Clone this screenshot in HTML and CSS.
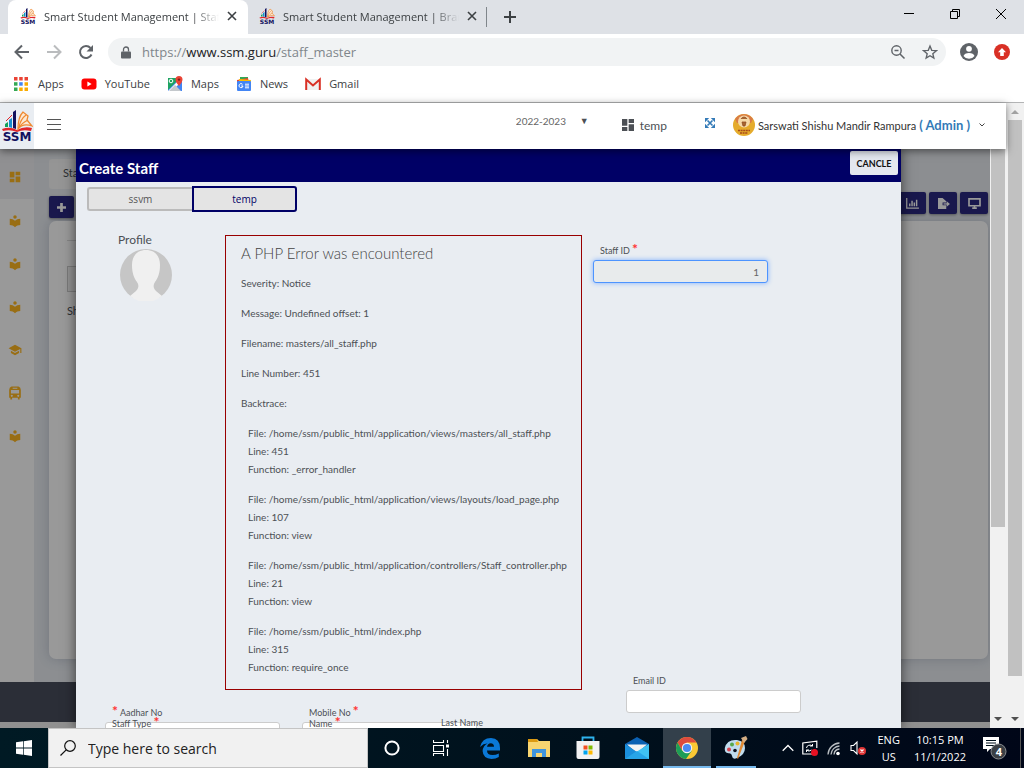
FILE: index.html
```
<!DOCTYPE html>
<html lang="en">
<head>
    <meta charset="UTF-8">
    <meta name="viewport" content="width=device-width, initial-scale=1.0">
    <title>Smart Student Management | Staff Master</title>
    <link rel="stylesheet" href="styles.css">
</head>
<body>

<!-- shared symbols -->
<svg class="symbols" aria-hidden="true">
    <symbol id="ssm-logo" viewBox="0 0 32 32">
        <path d="M1 19 Q9 16 16 20 Q23 16 31 18 L30 21 Q22 19 16 22 Q9 19 2 21Z" fill="#e0262b"/>
        <path d="M4 14 L7 12 V17 L4 17Z" fill="#14a05a"/>
        <path d="M8 10 L11 8 V18 L8 17Z" fill="#168fd0"/>
        <path d="M12 2 L15 0 V19 L12 18Z" fill="#12125e"/>
        <path d="M5 11 L11 5" stroke="#e0262b" fill="none"/>
        <path d="M17 19 C17 11 18 6 22 2 L27 6 L26 10 L31 16 C25 14 20 15 17 19Z" fill="#fbe9d6" stroke="#ef8a32" stroke-width="1.3"/>
        <path d="M18 17 C19 12 21 8 25 5 M18 18 C20 14 23 12 27 10" stroke="#ef8a32" stroke-width="1.2" fill="none"/>
        <text x="16" y="31" text-anchor="middle" class="logo-text">SSM</text>
    </symbol>
    <symbol id="close-x" viewBox="0 0 10 10"><path d="M1 1 L9 9 M9 1 L1 9" stroke="currentColor" stroke-width="1.6"/></symbol>
    <symbol id="dashboard" viewBox="0 0 24 24"><path d="M3 13h8V3H3v10zm0 8h8v-6H3v6zm10 0h8V11h-8v10zm0-18v6h8V3h-8z" fill="currentColor"/></symbol>
    <symbol id="reader" viewBox="0 0 24 24"><path d="M12 11.6C9.700 9.400 6.500 8 3 8v11c3.500 0 6.700 1.300 9 3.500 2.300-2.200 5.500-3.500 9-3.500V8c-3.500 0-6.700 1.400-9 3.600zM12 8a3 3 0 1 0 0-6 3 3 0 0 0 0 6z" fill="currentColor"/></symbol>
    <symbol id="school" viewBox="0 0 24 24"><path d="M5 13.200v4L12 21l7-3.800v-4L12 17l-7-3.800zM12 3 1 9l11 6 9-4.900V17h2V9L12 3z" fill="currentColor"/></symbol>
    <symbol id="bus" viewBox="0 0 24 24"><path d="M6 1h12q4 1 4 6v13h-2v3h-3v-3H7v3H4v-3H2V7q0-5 4-6z M5 7v6h14V7z M8 3v1.500h8V3z M6.500 15a1.700 1.700 0 1 0 .1 0z M17.500 15a1.700 1.700 0 1 0 .1 0z" fill="currentColor" fill-rule="evenodd"/></symbol>
</svg>

<div class="screen">

    <!-- browser tabs -->
    <div class="tab-strip">
        <div class="tab active">
            <svg class="favicon"><use href="#ssm-logo"/></svg>
            <span class="tab-title">Smart Student Management | Staff Master</span>
            <button class="tab-close" aria-label="Close tab"><svg><use href="#close-x"/></svg></button>
        </div>
        <div class="tab">
            <svg class="favicon"><use href="#ssm-logo"/></svg>
            <span class="tab-title">Smart Student Management | Branch</span>
            <button class="tab-close" aria-label="Close tab"><svg><use href="#close-x"/></svg></button>
        </div>
        <button class="new-tab" aria-label="New tab">
            <svg viewBox="0 0 12 12"><path d="M6 0v12M0 6h12" stroke="#3c4043" stroke-width="2"/></svg>
        </button>
        <div class="window-buttons">
            <button aria-label="Minimize"><svg viewBox="0 0 10 10"><path d="M0 4.500h10" stroke="#000"/></svg></button>
            <button aria-label="Restore"><svg viewBox="0 0 10 10"><path d="M.5 2.500h7v7h-7zM2.500 2.500v-2h7v7h-2" fill="none" stroke="#000"/></svg></button>
            <button aria-label="Close"><svg viewBox="0 0 10 10"><path d="M0 0l10 10M10 0L0 10" stroke="#000"/></svg></button>
        </div>
    </div>

    <div class="toolbar">
        <button class="tool" aria-label="Back"><svg viewBox="0 0 16 16"><path d="M15 8H2M8 1.500L1.500 8 8 14.500" fill="none" stroke="#5f6368" stroke-width="2"/></svg></button>
        <button class="tool" aria-label="Forward"><svg viewBox="0 0 16 16"><path d="M1 8h13M8 1.500L14.500 8 8 14.500" fill="none" stroke="#babcbe" stroke-width="2"/></svg></button>
        <button class="tool" aria-label="Reload"><svg viewBox="0 0 16 16"><path d="M13.500 10.500A6 6 0 1 1 12.500 4" fill="none" stroke="#5f6368" stroke-width="2"/><path d="M15 1v6.500H8.500z" fill="#5f6368"/></svg></button>
        <div class="omnibox">
            <svg class="lock" viewBox="0 0 10 12"><path d="M1 5h8q1 0 1 1v5q0 1-1 1H1q-1 0-1-1V6q0-1 1-1z" fill="#5f6368"/><path d="M2.500 5V3a2.500 2.500 0 0 1 5 0v2" fill="none" stroke="#5f6368" stroke-width="1.300"/></svg>
            <span class="url">https://<b>www.ssm.guru</b>/staff_master</span>
            <button aria-label="Zoom"><svg viewBox="-1 -1 16 16"><path d="M9 9l4.500 4.500M3.500 5.500h4" stroke="#5f6368" stroke-width="1.500"/><circle cx="5.500" cy="5.500" r="4.700" fill="none" stroke="#5f6368" stroke-width="1.400"/></svg></button>
            <button aria-label="Bookmark this page"><svg viewBox="0 0 24 24"><path d="M12 3l2.600 6.500 6.900.5-5.300 4.500 1.600 6.700L12 17.500l-5.800 3.700 1.600-6.700L2.500 10l6.900-.5z" fill="none" stroke="#5f6368" stroke-width="2"/></svg></button>
        </div>
        <button class="account" aria-label="Profile"><svg viewBox="0 0 18 18"><circle cx="9" cy="9" r="9" fill="#5f6368"/><circle cx="9" cy="5.800" r="2.900" fill="#fff"/><path d="M3.500 13q1-3 5.500-3t5.500 3q-2 2.800-5.500 2.800T3.500 13z" fill="#fff"/></svg></button>
        <button class="update" aria-label="Update"><svg viewBox="0 0 16 16"><circle cx="8" cy="8" r="8" fill="#d93025"/><path d="M8 4l4 4.200H9.800V12H6.200V8.200H4z" fill="#fff"/></svg></button>
    </div>

    <nav class="bookmarks">
        <a href="#"><svg viewBox="0 0 14 14"><path d="M0 0h3.500v3.500H0zM5.200 0h3.500v3.500H5.200zM10.500 0H14v3.500h-3.500z" fill="#ea4335"/><path d="M0 5.200h3.500v3.500H0z" fill="#34a853"/><path d="M5.200 5.200h3.500v3.500H5.200z" fill="#4285f4"/><path d="M10.500 5.200H14v3.500h-3.500zM5.200 10.500h3.500V14H5.200zM10.500 10.500H14V14h-3.500z" fill="#f9ab00"/><path d="M0 10.500h3.500V14H0z" fill="#34a853"/></svg>Apps</a>
        <a href="#"><svg viewBox="0 0 16 16"><rect y="2.500" x=".5" width="15" height="11" rx="3" fill="#f00"/><path d="M6.400 5.500v5l4.200-2.500z" fill="#fff"/></svg>YouTube</a>
        <a href="#"><svg viewBox="0 0 16 16"><path d="M1 2h14v13H1z" fill="#4285f4"/><path d="M1 2h12L1 14z" fill="#1ea362"/><path d="M1 15L14 2l1 1v2L5 15z" fill="#fff"/><path d="M2 15l6-6 6 6z" fill="#c4c8cc"/><circle cx="4" cy="5" r="1.800" fill="none" stroke="#fff"/><path d="M12 10Q8.500 6 8.500 3.500a3.500 3.500 0 0 1 7 0Q15.500 6 12 10z" fill="#ea4335"/><circle cx="12" cy="3.600" r="1.200" fill="#801f18"/></svg>Maps</a>
        <a href="#"><svg viewBox="0 0 16 16"><path d="M4 1h8v5H4z" fill="#34a853"/><path d="M1 4l11-2 1 5H1z" fill="#ea4335"/><path d="M3 3l12 1-1 5H3z" fill="#fbbc04"/><rect x="1" y="5" width="14" height="10" rx="1" fill="#4285f4"/><path d="M6.500 8.300A2 2 0 1 0 7 10H5.200M9 8.200h4M9 10h4M9 11.800h4" fill="none" stroke="#fff"/></svg>News</a>
        <a href="#"><svg viewBox="0 0 16 16"><path d="M1 3h14v11H1z" fill="#f1f1f1"/><path d="M1.200 14V3.500L8 9.500l6.800-6V14" fill="none" stroke="#d93025" stroke-width="2"/></svg>Gmail</a>
    </nav>

    <!-- page -->
    <div class="page">
        <div class="frame">
            <header class="app-header">
                <a class="brand" href="#" aria-label="SSM"><svg><use href="#ssm-logo"/></svg></a>
                <button class="menu-toggle" aria-label="Toggle menu"><span></span><span></span><span></span></button>
                <div class="header-right">
                    <label class="session">
                        <select aria-label="Session"><option>2022-2023</option></select>
                        <span>▼</span>
                    </label>
                    <a class="branch" href="#"><svg><use href="#dashboard"/></svg>temp</a>
                    <button class="expand" aria-label="Full screen">
                        <svg viewBox="0 0 12 12"><path d="M3 3l6 6M9 3L3 9" stroke="#337ab7" stroke-width="2"/><path d="M0 0h5L0 5zM12 0v5L7 0zM0 12V7l5 5zM12 12H7l5-5z" fill="#337ab7"/></svg>
                    </button>
                    <button class="user">
                        <svg class="user-pic" viewBox="0 0 22 22"><circle cx="11" cy="11" r="11" fill="#e5ab2b"/><path d="M2 5a11 11 0 0 1 18 0L18 9H4z" fill="#d97b45"/><ellipse cx="11" cy="7.500" rx="6" ry="6" fill="#f5d9a8"/><path d="M8 5q1-2 3-2t3 2M9 8h4l-1 4h-2z" stroke="#8f4c24" stroke-width=".8" fill="#a8652f"/><path d="M5 16.500h12M7 19h8" stroke="#a6491b" stroke-width="1.400" stroke-dasharray="2 .6"/></svg>
                        <span>Sarswati Shishu Mandir Rampura</span>
                        <strong>( Admin )</strong>
                        <svg class="chevron" viewBox="0 0 6 4"><path d="M.5.5L3 3 5.500.5" fill="none" stroke="#444"/></svg>
                    </button>
                </div>
            </header>

            <div class="stage">
                <div class="content">
                    <nav class="sidebar">
                        <a href="#" class="current" aria-label="Dashboard"><svg><use href="#dashboard"/></svg></a>
                        <a href="#" aria-label="Masters"><svg><use href="#reader"/></svg></a>
                        <a href="#" aria-label="Students"><svg><use href="#reader"/></svg></a>
                        <a href="#" aria-label="Fees"><svg><use href="#reader"/></svg></a>
                        <a href="#" aria-label="Exams"><svg><use href="#school"/></svg></a>
                        <a href="#" aria-label="Transport"><svg><use href="#bus"/></svg></a>
                        <a href="#" aria-label="Reports"><svg><use href="#reader"/></svg></a>
                    </nav>
                    <main class="main">
                        <div class="crumb">Staff</div>
                        <div class="actions">
                            <button class="action add" aria-label="Add"><svg viewBox="0 0 10 10"><path d="M5 0v10M0 5h10" stroke="#fff" stroke-width="3"/></svg></button>
                            <button class="action" aria-label="Chart"><svg viewBox="0 0 14 12"><path d="M.7 0v11H14" fill="none" stroke="#fff" stroke-width="1.400"/><path d="M4 9V6M6.500 9V3M9 9V5M11.500 9V2" stroke="#fff" stroke-width="1.600"/></svg></button>
                            <button class="action" aria-label="Export"><svg viewBox="0 0 14 12"><path d="M1 0h5l4 3.500V5H6v3h4v4H1z" fill="#fff"/><path d="M7 6.500h4" stroke="#fff" stroke-width="1.400"/><path d="M10.500 3.500L14 6.500l-3.500 3z" fill="#fff"/></svg></button>
                            <button class="action" aria-label="Display"><svg viewBox="0 0 14 12"><path d="M1 1h12v7.500H1zM4.500 11h5M7 8v3" fill="none" stroke="#fff" stroke-width="1.800"/></svg></button>
                        </div>
                        <section class="card">
                            <hr>
                            <div class="filter"></div>
                            <p>Show</p>
                        </section>
                    </main>
                </div>
                <footer class="footer"></footer>

                <div class="backdrop"></div>

                <form class="modal">
                    <div class="modal-header">
                        <h2>Create Staff</h2>
                        <button type="button" class="cancel">CANCLE</button>
                    </div>
                    <div class="modal-tabs">
                        <button type="button">ssvm</button>
                        <button type="button" class="selected">temp</button>
                    </div>
                    <div class="modal-body">
                        <div class="profile">
                            <span>Profile</span>
                            <svg viewBox="0 0 52 52"><circle cx="26" cy="26" r="26" fill="#c6c6c6"/><path d="M26 1C17 1 12 7 12 16c0 8 2 13 5 17 2 3 2 6-1 9l-6 5q7 6 16 6t16-6l-6-5c-3-3-3-6-1-9 3-4 5-9 5-17C40 7 35 1 26 1z" fill="#f0f0f0"/></svg>
                        </div>

                        <div class="php-error">
                            <h4>A PHP Error was encountered</h4>
                            <p>Severity: Notice</p>
                            <p>Message: Undefined offset: 1</p>
                            <p>Filename: masters/all_staff.php</p>
                            <p>Line Number: 451</p>
                            <p>Backtrace:</p>
                            <p class="trace">File: /home/ssm/public_html/application/views/masters/all_staff.php<br>Line: 451<br>Function: _error_handler</p>
                            <p class="trace">File: /home/ssm/public_html/application/views/layouts/load_page.php<br>Line: 107<br>Function: view</p>
                            <p class="trace">File: /home/ssm/public_html/application/controllers/Staff_controller.php<br>Line: 21<br>Function: view</p>
                            <p class="trace">File: /home/ssm/public_html/index.php<br>Line: 315<br>Function: require_once</p>
                        </div>

                        <div class="side-fields">
                            <div class="field">
                                <label for="staff-id">Staff ID <i>*</i></label>
                                <input type="text" id="staff-id" class="staff-id" value="1" readonly>
                            </div>
                            <div class="field email">
                                <label for="email">Email ID</label>
                                <input type="email" id="email">
                            </div>
                        </div>

                        <div class="more-fields">
                            <div class="field stacked">
                                <label for="aadhar"><i>*</i> Aadhar No</label>
                                <label for="aadhar">Staff Type <i>*</i></label>
                                <input type="text" id="aadhar">
                            </div>
                            <div class="field stacked">
                                <label for="mobile">Mobile No <i>*</i></label>
                                <label for="mobile">Name <i>*</i></label>
                                <input type="text" id="mobile">
                            </div>
                            <span class="last-name">Last Name</span>
                        </div>
                    </div>
                </form>

                <div class="scrollbar inner">
                    <div class="thumb"></div>
                    <svg viewBox="0 0 8 4"><path d="M0 0h8L4 4z" fill="#505050"/></svg>
                </div>
            </div>
        </div>
        <div class="scrollbar outer">
            <svg viewBox="0 0 8 4"><path d="M0 4h8L4 0z" fill="#a3a3a3"/></svg>
            <div class="thumb"></div>
            <svg viewBox="0 0 8 4"><path d="M0 0h8L4 4z" fill="#505050"/></svg>
        </div>
    </div>

    <!-- windows taskbar -->
    <div class="taskbar">
        <button class="start" aria-label="Start"><svg viewBox="0 0 16 16"><path d="M0 2.300L7 1.300V7.600H0zM7.700 1.200L16 0v7.600H7.700zM0 8.400h7v6.300L0 13.700zM7.700 8.400H16V16l-8.300-1.200z" fill="#fff"/></svg></button>
        <label class="search">
            <svg viewBox="0 0 16 16"><circle cx="10" cy="6" r="5.300" fill="none" stroke="#111" stroke-width="1.200"/><path d="M6.200 9.800L.5 15.500" stroke="#111" stroke-width="1.200"/></svg>
            <input type="text" placeholder="Type here to search" aria-label="Type here to search">
        </label>
        <div class="tasks">
            <button class="task" aria-label="Cortana"><svg class="small" viewBox="0 0 16 16"><circle cx="8" cy="8" r="6.600" fill="none" stroke="#fff" stroke-width="2"/></svg></button>
            <button class="task" aria-label="Task view"><svg class="small" viewBox="0 0 16 16"><path d="M.5 0v2.500h10V0M.5 5.500h10v6H.5zM.5 16v-2.500h10V16M14.500 0v3M14.500 9v7" fill="none" stroke="#fff" stroke-width="1.100"/><path d="M13 4.500h3v3h-3z" fill="#fff"/></svg></button>
            <button class="task" aria-label="Edge"><svg viewBox="0 0 24 24"><path d="M2 11Q4 2 13 2q9 .5 9 10v2.500H9Q9 19 14.500 19q3.500 0 6.300-1.600V21q-3 1.900-7.300 1.900Q5 22.500 4.600 15 5 10 9.500 7.600 5.500 7.500 2 11zM9 10.800h7Q16 7.200 12.700 7.200 9.800 7.300 9 10.800z" fill="#0a78d7"/></svg></button>
            <button class="task" aria-label="File Explorer"><svg viewBox="0 0 24 24"><path d="M1 3h9l2 2h11v16H1z" fill="#f8d570"/><path d="M1 3h9l1 3H1z" fill="#dc9a12"/><path d="M5 21v-8h14v8h-4v-4H9v4z" fill="#3f94dc"/></svg></button>
            <button class="task" aria-label="Store"><svg viewBox="0 0 24 24"><path d="M6.500 6V1.500h11V6" fill="none" stroke="#2eb3ee" stroke-width="1.800"/><path d="M.5 5h23v16q0 2-2 2h-19q-2 0-2-2z" fill="#f2f2f2"/><path d="M7.500 9.500h4v4h-4z" fill="#f25022"/><path d="M12.500 9.500h4v4h-4z" fill="#7fba00"/><path d="M7.500 14.500h4v4h-4z" fill="#00a4ef"/><path d="M12.500 14.500h4v4h-4z" fill="#ffb900"/></svg></button>
            <button class="task" aria-label="Mail"><svg viewBox="0 0 24 24"><path d="M0 8l12-7 12 7v6H0z" fill="#0b61b3"/><path d="M2 8.500h20L12 17z" fill="#f4f4f4"/><path d="M0 8l12 8-12 7z" fill="#1b8fdc"/><path d="M24 8v15H0z" fill="#3fc1f2"/><path d="M0 23l12-8 12 8z" fill="#27a5e8"/></svg></button>
            <button class="task running focused" aria-label="Chrome"><svg viewBox="0 0 24 24"><circle cx="12" cy="12" r="11" fill="#fbc934"/><path d="M2.500 6.500A11 11 0 0 1 21.500 6.500H12L7.200 14.700z" fill="#dd4b3e"/><path d="M2.500 6.500A11 11 0 0 0 11 23l5.800-8.300H7.200z" fill="#1d9d58"/><circle cx="12" cy="12" r="5.200" fill="#f5f5f5"/><circle cx="12" cy="12" r="4.100" fill="#4a8af4"/></svg></button>
            <button class="task running" aria-label="Paint"><svg viewBox="0 0 24 24"><path d="M13 4Q3 3 .8 12q-.6 5 3.600 5.200 3-.4 3.600 2.800Q8.600 24 13 22q8-3 8-10 0-7-8-8z" fill="#bfdcee"/><circle cx="5" cy="13.500" r="2" fill="#d8434e"/><circle cx="8" cy="8.500" r="2" fill="#56a84b"/><circle cx="13.500" cy="7.500" r="2" fill="#e9b52b"/><circle cx="11" cy="14.500" r="1.800" fill="#0d1420"/><path d="M21 5L14 23l-1-1 5-18z" fill="#e08a34"/><path d="M17 2l5-2 1.500 3-3.500 4z" fill="#d4ae84"/></svg></button>
        </div>
        <div class="tray">
            <svg class="tray-up" viewBox="0 0 12 7"><path d="M.7 6.300L6 1l5.300 5.300" fill="none" stroke="#fff" stroke-width="1.300"/></svg>
            <svg viewBox="0 0 16 16"><path d="M10 14H.8V3l14-1.800V8" fill="none" stroke="#fff" stroke-width="1.200"/><path d="M4.500 8a3.500 3 0 0 1 6-2V4M10.500 6H8M4.500 12v-2H7M4.500 10a3.500 3 0 0 0 5 0" fill="none" stroke="#fff"/><circle cx="12.500" cy="12.500" r="3.500" fill="#e81123"/></svg>
            <svg viewBox="0 0 16 16"><path d="M2 14.500A12 12 0 0 1 13.500 3M5 14.500A9 9 0 0 1 13.500 6M8 14.500A6 6 0 0 1 13.500 9" fill="none" stroke="#b9bec2" stroke-width="1.300"/><circle cx="12" cy="13.500" r="1.800" fill="#fff"/></svg>
            <svg viewBox="0 0 16 16"><path d="M1 5.500h2.500L7 2v12L3.500 10.500H1z" fill="none" stroke="#fff" stroke-width="1.100"/><circle cx="12" cy="11" r="4" fill="#e03535"/><path d="M10.500 9.500l3 3M13.500 9.500l-3 3" stroke="#fff" stroke-width="1.200"/></svg>
            <div class="tray-text lang">ENG<br>US</div>
            <div class="tray-text">10:15 PM<br>11/1/2022</div>
            <button class="notices" aria-label="Notifications">
                <svg viewBox="0 0 24 24"><path d="M0 1h16v12H7l-3 3v-3H0z" fill="#fff"/><path d="M3 4.500h10M3 7h10M3 9.500h10" stroke="#00111c"/><circle cx="15.500" cy="15.500" r="7.500" fill="#3b4045" stroke="#8a8d90"/></svg>
                <span>4</span>
            </button>
        </div>
    </div>
</div>

</body>
</html>
```
FILE: styles.css
```
* {
    box-sizing: border-box;
}

body {
    margin: 0;
    font-family: Lato, "Noto Sans", sans-serif;
    font-size: 10px;
    color: #4c5055;
}

button {
    display: flex;
    align-items: center;
    justify-content: center;
    padding: 0;
    border: none;
    background: none;
    font-family: inherit;
    color: inherit;
    cursor: pointer;
}

a {
    color: inherit;
    text-decoration: none;
}

svg {
    display: block;
    flex: none;
}

.symbols {
    position: absolute;
    width: 0;
    height: 0;
}

.logo-text {
    font: bold 12px "DejaVu Sans", sans-serif;
    fill: #12125e;
}

.screen {
    display: flex;
    flex-direction: column;
    height: 100vh;
    overflow: hidden;
}

/* browser */
.tab-strip,
.toolbar,
.bookmarks,
.taskbar {
    flex: none;
    display: flex;
    align-items: center;
    font-family: "Open Sans", "Noto Sans", sans-serif;
}

.tab-strip {
    height: 34px;
    padding-left: 8px;
    background: #dee1e6;
    font-size: 11px;
    color: #3c4043;
}

.tab {
    display: flex;
    align-items: center;
    width: 240px;
    height: 34px;
    padding: 0 11px 2px 12px;
    gap: 8px;
}

.tab.active {
    background: #fff;
    border-radius: 8px 8px 0 0;
}

.tab + .tab {
    padding-left: 11px;
}

.favicon {
    width: 16px;
    height: 16px;
}

.tab-title {
    flex: 1;
    overflow: hidden;
    white-space: nowrap;
    -webkit-mask-image: linear-gradient(to right, #000 85%, transparent);
    mask-image: linear-gradient(to right, #000 85%, transparent);
}

.tab-close svg {
    width: 10px;
    height: 10px;
}

.new-tab {
    width: 46px;
    height: 20px;
    border-left: 1px solid #80868b;
    margin-left: -2px;
}

.new-tab svg {
    width: 12px;
    height: 12px;
}

.window-buttons {
    display: flex;
    margin-left: auto;
    align-self: flex-start;
}

.window-buttons button {
    width: 46px;
    height: 28px;
}

.window-buttons svg {
    width: 10px;
    height: 10px;
}

.toolbar {
    height: 36px;
    padding: 0 14px;
    gap: 16px;
}

.toolbar svg {
    width: 16px;
    height: 16px;
}

.omnibox {
    flex: 1;
    display: flex;
    align-items: center;
    gap: 16px;
    height: 28px;
    margin: 0 -2px;
    padding: 0 8px 0 13px;
    border-radius: 14px;
    background: #f1f3f4;
}

.toolbar .lock {
    width: 10px;
    height: 13px;
}

.url {
    flex: 1;
    margin-left: -5px;
    font-size: 13px;
    color: #80868b;
}

.url b {
    font-weight: normal;
    color: #202124;
}

.toolbar .account svg {
    width: 18px;
    height: 18px;
}

.bookmarks {
    height: 33px;
    padding: 0 14px 5px;
    gap: 17px;
    border-bottom: 1px solid #b3b4b5;
    font-size: 11px;
    color: #3c4043;
}

.bookmarks a {
    display: flex;
    align-items: center;
    gap: 8px;
}

.bookmarks svg {
    width: 16px;
    height: 16px;
}

.bookmarks a:first-child {
    gap: 10px;
}

.bookmarks a:first-child svg {
    width: 14px;
    height: 14px;
}

/* page */
.page {
    flex: 1;
    min-height: 0;
    display: flex;
}

.frame {
    flex: 1;
    min-width: 0;
    display: flex;
    flex-direction: column;
}

.app-header {
    position: relative;
    z-index: 5;
    flex: none;
    display: flex;
    align-items: center;
    height: 46px;
    background: #fff;
    box-shadow: 0 2px 8px rgba(0, 0, 0, 0.5);
}

.brand {
    width: 34px;
    padding: 7px 1px;
    background: #e9edf2;
}

.brand svg {
    width: 32px;
    height: 32px;
}

.menu-toggle {
    flex-direction: column;
    gap: 4px;
    width: 14px;
    margin-left: 13px;
    margin-bottom: 4px;
}

.menu-toggle span {
    width: 14px;
    height: 1px;
    background: #555;
}

.header-right {
    display: flex;
    align-items: center;
    margin-left: auto;
    padding: 0 21px 2px 0;
}

.session {
    display: flex;
    align-items: center;
    gap: 13px;
    margin-right: 31px;
    margin-bottom: 9px;
}

.session select {
    appearance: none;
    padding: 0;
    border: none;
    background: none;
    font: 10px Lato, sans-serif;
    color: #666;
}

.session span {
    font-size: 9px;
}

.branch {
    display: flex;
    align-items: center;
    gap: 4px;
    margin-right: 38px;
    font-size: 12px;
}

.branch svg {
    width: 16px;
    height: 16px;
}

.expand {
    margin-right: 18px;
    margin-bottom: 5px;
}

.expand svg {
    width: 10px;
    height: 10px;
}

.user {
    gap: 3px;
    font-size: 11px;
    color: #333;
}

.user-pic {
    width: 22px;
    height: 22px;
}

.user strong {
    font-size: 13px;
    line-height: 14px;
    color: #337ab7;
}

.chevron {
    width: 6px;
    height: 4px;
    margin-left: 6px;
}

.stage {
    position: relative;
    flex: 1;
    min-height: 0;
    display: flex;
    flex-direction: column;
    padding-right: 16px;
    overflow: hidden;
}

.content {
    flex: 1;
    min-height: 0;
    display: flex;
    background: #e9edf2;
}

.sidebar {
    display: flex;
    flex-direction: column;
    width: 34px;
    background: #fff;
    color: #ffb822;
}

.sidebar a {
    display: flex;
    align-items: center;
    justify-content: center;
    height: 43px;
    padding-right: 4px;
}

.sidebar .current {
    height: 50px;
    padding-top: 5px;
    background: #f0f1f3;
}

.sidebar svg {
    width: 14px;
    height: 14px;
}

.main {
    flex: 1;
    display: flex;
    flex-direction: column;
    padding: 10px 2px 23px 15px;
}

.crumb {
    width: 40%;
    padding: 5px 14px 7px;
    border-radius: 3px;
    background: #f8f8f8;
    font-size: 11px;
    line-height: 18px;
}

.actions {
    display: flex;
    gap: 3px;
    margin: 3px 0;
}

.action {
    width: 28px;
    height: 22px;
    border-radius: 2px;
    background: #2b2880;
    box-shadow: 0 1px 3px rgba(0, 0, 0, 0.4);
}

.action svg {
    width: 13px;
    height: 11px;
}

.add {
    width: 25px;
    margin-top: 4px;
    margin-right: auto;
}

.add svg {
    width: 9px;
    height: 9px;
}

.card {
    flex: 1;
    padding: 19px 18px;
    border-radius: 7px;
    background: #fff;
    box-shadow: 0 0 12px rgba(60, 70, 110, 0.25);
    font-size: 11px;
}

.card hr {
    width: 50%;
    margin: 0 0 25px;
    border: none;
    border-top: 1px solid #ddd;
}

.card p {
    margin: 12px 0;
}

.filter {
    width: 50%;
    height: 26px;
    border: 1px solid #ccc;
    background: #f4f4f4;
}

.footer {
    flex: none;
    height: 46px;
    border-bottom: 6px solid #f1f1f1;
    background: #484e5d;
}

.backdrop {
    position: absolute;
    inset: 0;
    background: rgba(0, 0, 0, 0.4);
}

/* create staff dialog */
.modal {
    position: absolute;
    top: 0;
    left: 76px;
    right: 105px;
    background: #e9edf2;
    box-shadow: 0 0 12px rgba(0, 0, 0, 0.6);
}

.modal-header {
    display: flex;
    align-items: flex-start;
    justify-content: space-between;
    height: 33px;
    padding: 2px 3px;
    background: #000066;
    color: #fff;
}

.modal-header h2 {
    margin: 0;
    font-size: 15px;
    line-height: 34px;
}

.cancel {
    width: 48px;
    height: 24px;
    border-radius: 2px;
    background: #e4e7ef;
    font-size: 9px;
    font-weight: bold;
    color: #111;
}

.modal-tabs {
    display: flex;
    align-items: center;
    padding: 4px 11px 0;
    font-family: "Open Sans", sans-serif;
}

.modal-tabs button {
    width: 105px;
    height: 24px;
    border: 2px solid #bbb;
    border-right-width: 0;
    border-radius: 3px 0 0 3px;
    background: #e4e4e4;
    font-size: 10px;
    color: #555;
}

.modal-tabs .selected {
    height: 26px;
    border: 2px solid #000066;
    border-radius: 0 3px 3px 0;
    color: #000066;
}

.modal-body {
    display: grid;
    grid-template-columns: 149px 357px 1fr;
    padding-top: 23px;
}

.profile {
    padding-left: 42px;
    font-size: 12px;
    line-height: 10px;
}

.profile svg {
    width: 56px;
    height: 52px;
    margin-top: 4px;
}

.php-error {
    display: flow-root;
    padding: 0 0 1px 15px;
    border: 1px solid #990000;
    line-height: 18px;
    white-space: nowrap;
}

.php-error h4 {
    margin: 8px 0 12px;
    font-size: 15px;
    font-weight: 300;
    color: #444;
}

.php-error p {
    margin: 12px 0;
}

.php-error .trace {
    margin-left: 7px;
}

.field label {
    display: block;
    padding-left: 7px;
    font-size: 9px;
    line-height: 11px;
}

.field i {
    font-size: 14px;
    font-style: normal;
    font-weight: bold;
    line-height: 0;
    color: #f33;
}

.field input {
    display: block;
    width: 175px;
    height: 23px;
    padding: 0 8px;
    border: 1px solid #ccc;
    border-radius: 3px;
    background: #fff;
    font: 10px Lato, sans-serif;
    color: #666;
}

.field .staff-id {
    border-color: #4d94ff;
    background: #e8ebec;
    box-shadow: 0 0 5px #7fb0ff;
    text-align: right;
    outline: none;
}

.side-fields {
    grid-row: span 2;
    display: flex;
    flex-direction: column;
    justify-content: space-between;
    padding: 10px 11px 15px;
}

.side-fields .field {
    display: flex;
    flex-direction: column;
    gap: 4px;
}

.email {
    margin-left: 33px;
}

.more-fields {
    grid-column: 1 / 3;
    display: flex;
    gap: 22px;
    height: 38px;
    padding: 17px 0 0 29px;
}

.stacked {
    width: 175px;
}

/* second label sits on the input border */
.stacked input {
    margin-top: -7px;
}

.stacked label {
    position: relative;
    z-index: 1;
}

.last-name {
    z-index: 1;
    margin-top: 10px;
    margin-left: -58px;
    font-size: 9px;
    line-height: 11px;
}

/* scrollbars */
.scrollbar {
    display: flex;
    flex-direction: column;
    align-items: center;
    justify-content: space-between;
    background: #f1f1f1;
}

.scrollbar svg {
    width: 8px;
    height: 4px;
}

.thumb {
    width: 14px;
    background: #c1c1c1;
}

.inner {
    position: absolute;
    top: 0;
    right: 0;
    bottom: 0;
    width: 16px;
    padding-bottom: 7px;
}

.inner .thumb {
    height: 66%;
}

.outer {
    flex: none;
    width: 18px;
    padding: 7px 0;
}

.outer .thumb {
    height: 91%;
    margin-bottom: auto;
    margin-top: 6px;
}

/* taskbar */
.taskbar {
    height: 40px;
    background: linear-gradient(to right, #001a24, #00101c 60%, #000618);
    color: #fff;
}

.start {
    flex: none;
    width: 48px;
    height: 40px;
}

.start svg {
    width: 16px;
    height: 16px;
}

.tasks {
    display: flex;
    gap: 1px;
}

.task {
    flex: none;
    width: 48px;
    height: 40px;
    border: solid transparent;
    border-width: 2px 0;
}

.task svg {
    width: 24px;
    height: 24px;
}

.task .small {
    width: 16px;
    height: 16px;
}

.running {
    width: 40px;
    margin-left: 4px;
    border-bottom-color: #76b9ed;
}

.focused {
    width: 48px;
    margin-left: 1px;
    background: #33404b;
    border-top-color: #33404b;
}

.search {
    display: flex;
    align-items: center;
    gap: 12px;
    flex: 0 1 320px;
    height: 40px;
    padding-left: 11px;
    border: 1px solid #c4c4c4;
    background: #f1f1f1;
}

.search svg {
    width: 16px;
    height: 16px;
}

.search input {
    flex: 1;
    min-width: 0;
    padding: 0;
    border: none;
    background: none;
    font: 14px "Open Sans", sans-serif;
}

.search input::placeholder {
    color: #222;
    opacity: 1;
}

.tray {
    display: flex;
    align-items: center;
    gap: 8px;
    height: 40px;
    margin-left: auto;
    margin-right: 3px;
    padding-right: 13px;
    border-right: 1px solid #555;
}

.tray svg {
    width: 16px;
    height: 16px;
}

.tray .tray-up {
    width: 12px;
    height: 8px;
}

.tray-text {
    margin-left: 6px;
    font-size: 11px;
    line-height: 17px;
    text-align: center;
}

.tray-text.lang {
    margin-left: 3px;
}

.notices {
    position: relative;
    margin-left: 9px;
}

.tray .notices svg {
    width: 24px;
    height: 24px;
}

.notices span {
    position: absolute;
    right: 5px;
    bottom: 1px;
    font-size: 11px;
    font-weight: bold;
}
```
